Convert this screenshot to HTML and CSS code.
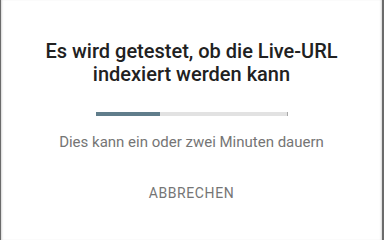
FILE: index.html
```html
<!DOCTYPE html>
<html lang="de">
<head>
<meta charset="utf-8">
<link rel="stylesheet" href="styles.css">
</head>
<body>
<div class="dialog">
  <h1 class="title">Es wird getestet, ob die Live-URL<br>indexiert werden kann</h1>
  <div class="progress"><div class="progress-fill"></div></div>
  <p class="hint">Dies kann ein oder zwei Minuten dauern</p>
  <button class="cancel">Abbrechen</button>
</div>
</body>
</html>
```
FILE: styles.css
```css
html, body {
  margin: 0;
  padding: 0;
  height: 100%;
}
body {
  background: #6b6b6b;
  display: flex;
  font-family: Roboto, "Liberation Sans", sans-serif;
}
.dialog {
  flex: 1;
  margin: 0 2px 0 1px;
  background: #fff;
  box-shadow: inset 2px 0 2px -1px #d8d8d8, inset -2px 0 2px -1px #d8d8d8;
  display: flex;
  flex-direction: column;
  align-items: center;
  padding-top: 40px;
}
.title {
  margin: 0;
  font-size: 20px;
  line-height: 23px;
  font-weight: 500;
  color: #212121;
  text-align: center;
}
.progress {
  margin-top: 26px;
  width: 192px;
  height: 4px;
  background: #e2e2e2;
  border-right: 1px solid #a8a8a8;
  box-sizing: border-box;
}
.progress-fill {
  width: 64px;
  height: 100%;
  background: #607d8b;
}
.hint {
  margin: 16px 0 0;
  font-size: 15px;
  line-height: 20px;
  color: #757575;
}
.cancel {
  margin-top: 31px;
  padding: 0;
  border: 0;
  background: none;
  font-family: inherit;
  font-size: 14px;
  line-height: 20px;
  font-weight: 400;
  letter-spacing: 0.6px;
  text-transform: uppercase;
  color: #757575;
}
```
